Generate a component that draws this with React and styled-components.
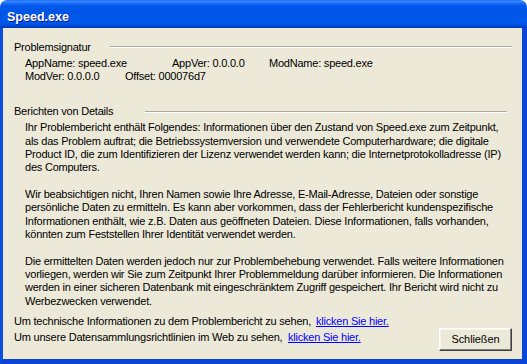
import React from 'react';
import styled, { createGlobalStyle } from 'styled-components';

const FONT = '"Liberation Sans", Arial, sans-serif';

const signature = [
  [
    { label: 'AppName: speed.exe', width: 147 },
    { label: 'AppVer: 0.0.0.0', width: 97 },
    { label: 'ModName: speed.exe' },
  ],
  [
    { label: 'ModVer: 0.0.0.0', width: 100 },
    { label: 'Offset: 000076d7' },
  ],
];

const paragraphs = [
  [
    'Ihr Problembericht enthält Folgendes: Informationen über den Zustand von Speed.exe zum Zeitpunkt,',
    'als das Problem auftrat; die Betriebssystemversion und verwendete Computerhardware; die digitale',
    'Product ID, die zum Identifizieren der Lizenz verwendet werden kann; die Internetprotokolladresse (IP)',
    'des Computers.',
  ],
  [
    'Wir beabsichtigen nicht, Ihren Namen sowie Ihre Adresse, E-Mail-Adresse, Dateien oder sonstige',
    'persönliche Daten zu ermitteln. Es kann aber vorkommen, dass der Fehlerbericht kundenspezifische',
    'Informationen enthält, wie z.B. Daten aus geöffneten Dateien. Diese Informationen, falls vorhanden,',
    'könnten zum Feststellen Ihrer Identität verwendet werden.',
  ],
  [
    'Die ermittelten Daten werden jedoch nur zur Problembehebung verwendet. Falls weitere Informationen',
    'vorliegen, werden wir Sie zum Zeitpunkt Ihrer Problemmeldung darüber informieren. Die Informationen',
    'werden in einer sicheren Datenbank mit eingeschränktem Zugriff gespeichert. Ihr Bericht wird nicht zu',
    'Werbezwecken verwendet.',
  ],
];

const links = [
  { text: 'Um technische Informationen zu dem Problembericht zu sehen,', width: 302 },
  { text: 'Um unsere Datensammlungsrichtlinien im Web zu sehen,', width: 274 },
];

const ErrorReportDialog = () => {
  return (
    <>
      <GlobalStyle />
      <Window>
        <TitleBar>Speed.exe</TitleBar>
        <Body>
          <SectionHeading>
            <HeadingLabel $width={96}>Problemsignatur</HeadingLabel>
            <Etched $end={0} />
          </SectionHeading>
          <Signature>
            {signature.map((row, i) => (
              <FieldRow key={i}>
                {row.map((f) => (
                  <Field key={f.label} $width={f.width}>
                    {f.label}
                  </Field>
                ))}
              </FieldRow>
            ))}
          </Signature>

          <SectionHeading $top={22.5}>
            <HeadingLabel $width={131}>Berichten von Details</HeadingLabel>
            <Etched $end={5} />
          </SectionHeading>
          <Details>
            {paragraphs.map((lines, i) => (
              <Paragraph key={i}>
                {lines.map((l, j) => (
                  <React.Fragment key={j}>
                    {l}
                    {j < lines.length - 1 && <br />}
                  </React.Fragment>
                ))}
              </Paragraph>
            ))}
          </Details>

          <Footer>
            <Links>
              {links.map((l) => (
                <LinkRow key={l.text}>
                  <LinkLabel $width={l.width}>{l.text}</LinkLabel>
                  <HereLink href="#">klicken Sie hier.</HereLink>
                </LinkRow>
              ))}
            </Links>
            <CloseButton>Schließen</CloseButton>
          </Footer>
        </Body>
      </Window>
    </>
  );
};

const GlobalStyle = createGlobalStyle`
* {
  margin: 0;
  padding: 0;
  box-sizing: border-box;
}

body {
  margin: 0;
  background: #ffffff;
  font-family: ${FONT};
  font-size: 11px;
  color: #000000;
}
`;

const Window = styled.div`
  width: 527px;
  height: 364px;
  display: flex;
  flex-direction: column;
  overflow: hidden;
`;

const TitleBar = styled.div`
  flex: none;
  height: 28px;
  display: flex;
  align-items: center;
  padding: 5px 0 0 7px;
  border-radius: 7px 7px 0 0;
  background: linear-gradient(
    180deg,
    #0a5ff5 0px,
    #3d8eff 1px,
    #1c6efa 3px,
    #0057e9 6px,
    #0055e6 14px,
    #0059ee 22px,
    #0050de 25px,
    #0037b9 28px
  );
  color: #ffffff;
  font-family: ${FONT};
  font-weight: bold;
  font-size: 12.5px;
  text-shadow: 1px 1px #0f1a8a;
`;

const Body = styled.div`
  flex: 1;
  background: #ece9d8;
  border-left: 3px solid #0b4ee0;
  border-right: 5px solid #0a45d8;
  border-bottom: 5px solid #0a45d8;
  padding: 12.7px 10px 0 11px;
  letter-spacing: -0.22px;
`;

const SectionHeading = styled.div`
  display: flex;
  align-items: center;
  height: 13.33px;
  margin-top: ${(p) => p.$top || 0}px;
`;

const HeadingLabel = styled.div`
  flex: none;
  width: ${(p) => p.$width}px;
  line-height: 13.33px;
  white-space: nowrap;
`;

const Etched = styled.div`
  flex: 1;
  height: 2px;
  margin-right: ${(p) => p.$end}px;
  border-top: 1px solid #aca899;
  border-bottom: 1px solid #ffffff;
`;

const Signature = styled.div`
  margin-top: 2.5px;
  padding-left: 11px;
`;

const FieldRow = styled.div`
  display: flex;
  line-height: 13px;
`;

const Field = styled.span`
  flex: none;
  width: ${(p) => (p.$width ? `${p.$width}px` : 'auto')};
  white-space: nowrap;
`;

const Details = styled.div`
  margin-top: 3.1px;
  padding-left: 11px;
`;

const Paragraph = styled.p`
  line-height: 13.33px;
  white-space: nowrap;
  margin-bottom: 13.33px;

  &:last-child {
    margin-bottom: 0;
  }
`;

const Footer = styled.div`
  display: flex;
  justify-content: space-between;
  align-items: flex-start;
  margin-top: 4.7px;
`;

const Links = styled.div`
  display: flex;
  flex-direction: column;
`;

const LinkRow = styled.div`
  display: flex;
  line-height: 16px;
  white-space: nowrap;
`;

const LinkLabel = styled.span`
  flex: none;
  width: ${(p) => p.$width}px;
`;

const HereLink = styled.a`
  color: #0000ff;
  text-decoration: underline;
`;

const CloseButton = styled.button`
  width: 73px;
  height: 23px;
  margin-top: 15.2px;
  background: #ece9d8;
  font-family: ${FONT};
  font-size: 11px;
  letter-spacing: -0.1px;
  color: #000000;
  border-style: solid;
  border-width: 1px;
  border-color: #ffffff #404040 #404040 #ffffff;
  box-shadow: inset -1px -1px #808080, inset 1px 1px #f5f4ee;
`;

export default ErrorReportDialog;
